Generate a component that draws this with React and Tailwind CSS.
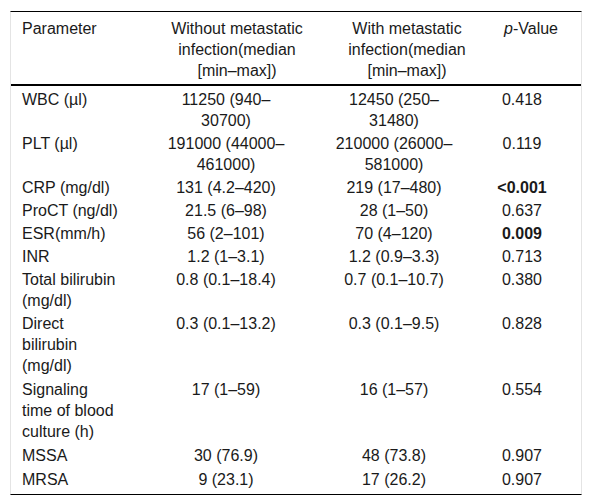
import React from "react";

const rows = [
  ["WBC (µl)", "11250 (940–30700)", "12450 (250–31480)", "0.418"],
  ["PLT (µl)", "191000 (44000–461000)", "210000 (26000–581000)", "0.119"],
  ["CRP (mg/dl)", "131 (4.2–420)", "219 (17–480)", "<0.001", true],
  ["ProCT (ng/dl)", "21.5 (6–98)", "28 (1–50)", "0.637"],
  ["ESR(mm/h)", "56 (2–101)", "70 (4–120)", "0.009", true],
  ["INR", "1.2 (1–3.1)", "1.2 (0.9–3.3)", "0.713"],
  ["Total bilirubin (mg/dl)", "0.8 (0.1–18.4)", "0.7 (0.1–10.7)", "0.380"],
  ["Direct bilirubin (mg/dl)", "0.3 (0.1–13.2)", "0.3 (0.1–9.5)", "0.828"],
  ["Signaling time of blood culture (h)", "17 (1–59)", "16 (1–57)", "0.554"],
  ["MSSA", "30 (76.9)", "48 (73.8)", "0.907"],
  ["MRSA", "9 (23.1)", "17 (26.2)", "0.907"],
];

export default function App() {
  return (
    <div
      className="w-[592px] h-[504px] bg-white pt-[11px] pl-[10px] text-[16px] text-[#1a1a1a]"
      style={{ fontFamily: '"Liberation Sans", Arial, sans-serif' }}
    >
      <div className="w-[572px] border-x border-x-[#e4e4e4] border-t border-t-black border-b border-b-black">
        <div className="grid grid-cols-[130px_192px_148px_100px] border-b-2 border-black leading-[21px] pt-[6px] pb-[3px]">
          <div className="pl-[11px]">Parameter</div>
          <div className="px-[28px] text-center">Without metastatic infection(median [min–max])</div>
          <div className="px-[6px] text-center">With metastatic infection(median [min–max])</div>
          <div className="text-center">
            <i>p</i>-Value
          </div>
        </div>
        <div className="flex flex-col pt-[2px] pb-[3px]">
          {rows.map((r, i) => (
            <div
              key={i}
              className={
                "grid grid-cols-[130px_170px_166px_104px] leading-[21px] py-px" +
                (i >= 8 ? " pt-[2px]" : "")
              }
            >
              <div className="pl-[11px] pr-[21px]">{r[0]}</div>
              <div className="px-[17px] text-center">{r[1]}</div>
              <div className="px-[15px] text-center">{r[2]}</div>
              <div className={"pr-[14px] text-center" + (r[4] ? " font-bold" : "")}>{r[3]}</div>
            </div>
          ))}
        </div>
      </div>
    </div>
  );
}
